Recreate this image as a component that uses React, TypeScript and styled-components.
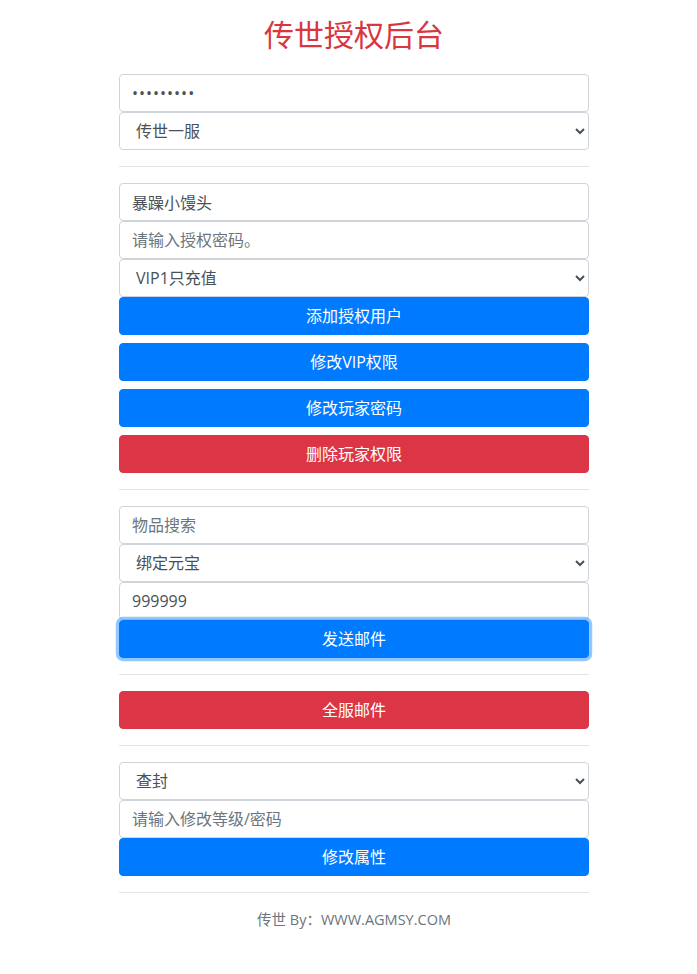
import React from "react";
import styled, { createGlobalStyle, css } from "styled-components";

const GlobalStyle = createGlobalStyle`
  * { box-sizing: border-box; }
  body {
    margin: 0;
    background: #fff;
    font-family: "Open Sans", "Noto Sans CJK SC", sans-serif;
    font-size: 16px;
    line-height: 1.5;
    color: #212529;
  }
`;

const Page = styled.div`
  width: 481px;
  margin: 0 auto;
  padding: 14px 0 0 11px;
`;

const Title = styled.h2`
  margin: 0 0 22px;
  text-align: center;
  font-size: 30px;
  font-weight: 400;
  line-height: 38px;
  color: #d9363e;
  font-family: "Noto Sans CJK SC", sans-serif;
`;

const Section = styled.div`
  display: flex;
  flex-direction: column;
`;

const Divider = styled.hr`
  margin: 16px 0;
  border: 0;
  border-top: 1px solid rgba(0, 0, 0, 0.1);
  height: 0;
`;

const fieldBase = css`
  display: block;
  width: 100%;
  height: 38px;
  padding: 6px 12px;
  font-family: "Open Sans", "Noto Sans CJK SC", sans-serif;
  font-size: 16px;
  line-height: 1.5;
  color: #495057;
  background: #fff;
  border: 1px solid #ced4da;
  border-radius: 4px;
  outline: none;
  &::placeholder {
    color: #6c757d;
    opacity: 1;
  }
`;

const Input = styled.input`
  ${fieldBase}
`;

const PasswordInput = styled.input`
  ${fieldBase}
  letter-spacing: 1px;
`;

const Select = styled.select`
  ${fieldBase}
`;

const Button = styled.button<{ $variant: "primary" | "danger"; $focused?: boolean; $gap?: boolean }>`
  display: block;
  width: 100%;
  height: 38px;
  padding: 6px 12px;
  margin-top: ${(p) => (p.$gap ? "8px" : "0")};
  font-family: "Open Sans", "Noto Sans CJK SC", sans-serif;
  font-size: 16px;
  line-height: 1.5;
  color: #fff;
  border: 1px solid ${(p) => (p.$variant === "primary" ? "#007bff" : "#dc3545")};
  background: ${(p) => (p.$variant === "primary" ? "#007bff" : "#dc3545")};
  border-radius: 4px;
  cursor: pointer;
  outline: none;
  box-shadow: ${(p) => (p.$focused ? "0 0 0 3.2px rgba(38, 143, 255, 0.5)" : "none")};
  position: relative;
`;

const Footer = styled.p`
  margin: 13px 0 0;
  text-align: center;
  font-size: 14.5px;
  color: #6c757d;
`;

export default function App() {
  return (
    <>
      <GlobalStyle />
      <Page>
        <Title>传世授权后台</Title>
        <Section>
          <PasswordInput type="password" defaultValue="123456789" />
          <Select defaultValue="1">
            <option value="1">传世一服</option>
          </Select>
        </Section>
        <Divider />
        <Section>
          <Input type="text" defaultValue="暴躁小馒头" />
          <Input type="text" placeholder="请输入授权密码。" />
          <Select defaultValue="1">
            <option value="1">VIP1只充值</option>
          </Select>
          <Button $variant="primary">添加授权用户</Button>
          <Button $variant="primary" $gap>修改VIP权限</Button>
          <Button $variant="primary" $gap>修改玩家密码</Button>
          <Button $variant="danger" $gap>删除玩家权限</Button>
        </Section>
        <Divider />
        <Section>
          <Input type="text" placeholder="物品搜索" />
          <Select defaultValue="1">
            <option value="1">绑定元宝</option>
          </Select>
          <Input type="text" defaultValue="999999" />
          <Button $variant="primary" $focused>发送邮件</Button>
        </Section>
        <Divider />
        <Section>
          <Button $variant="danger">全服邮件</Button>
        </Section>
        <Divider />
        <Section>
          <Select defaultValue="1">
            <option value="1">查封</option>
          </Select>
          <Input type="text" placeholder="请输入修改等级/密码" />
          <Button $variant="primary">修改属性</Button>
        </Section>
        <Divider />
        <Footer>传世 By：WWW.AGMSY.COM</Footer>
      </Page>
    </>
  );
}
